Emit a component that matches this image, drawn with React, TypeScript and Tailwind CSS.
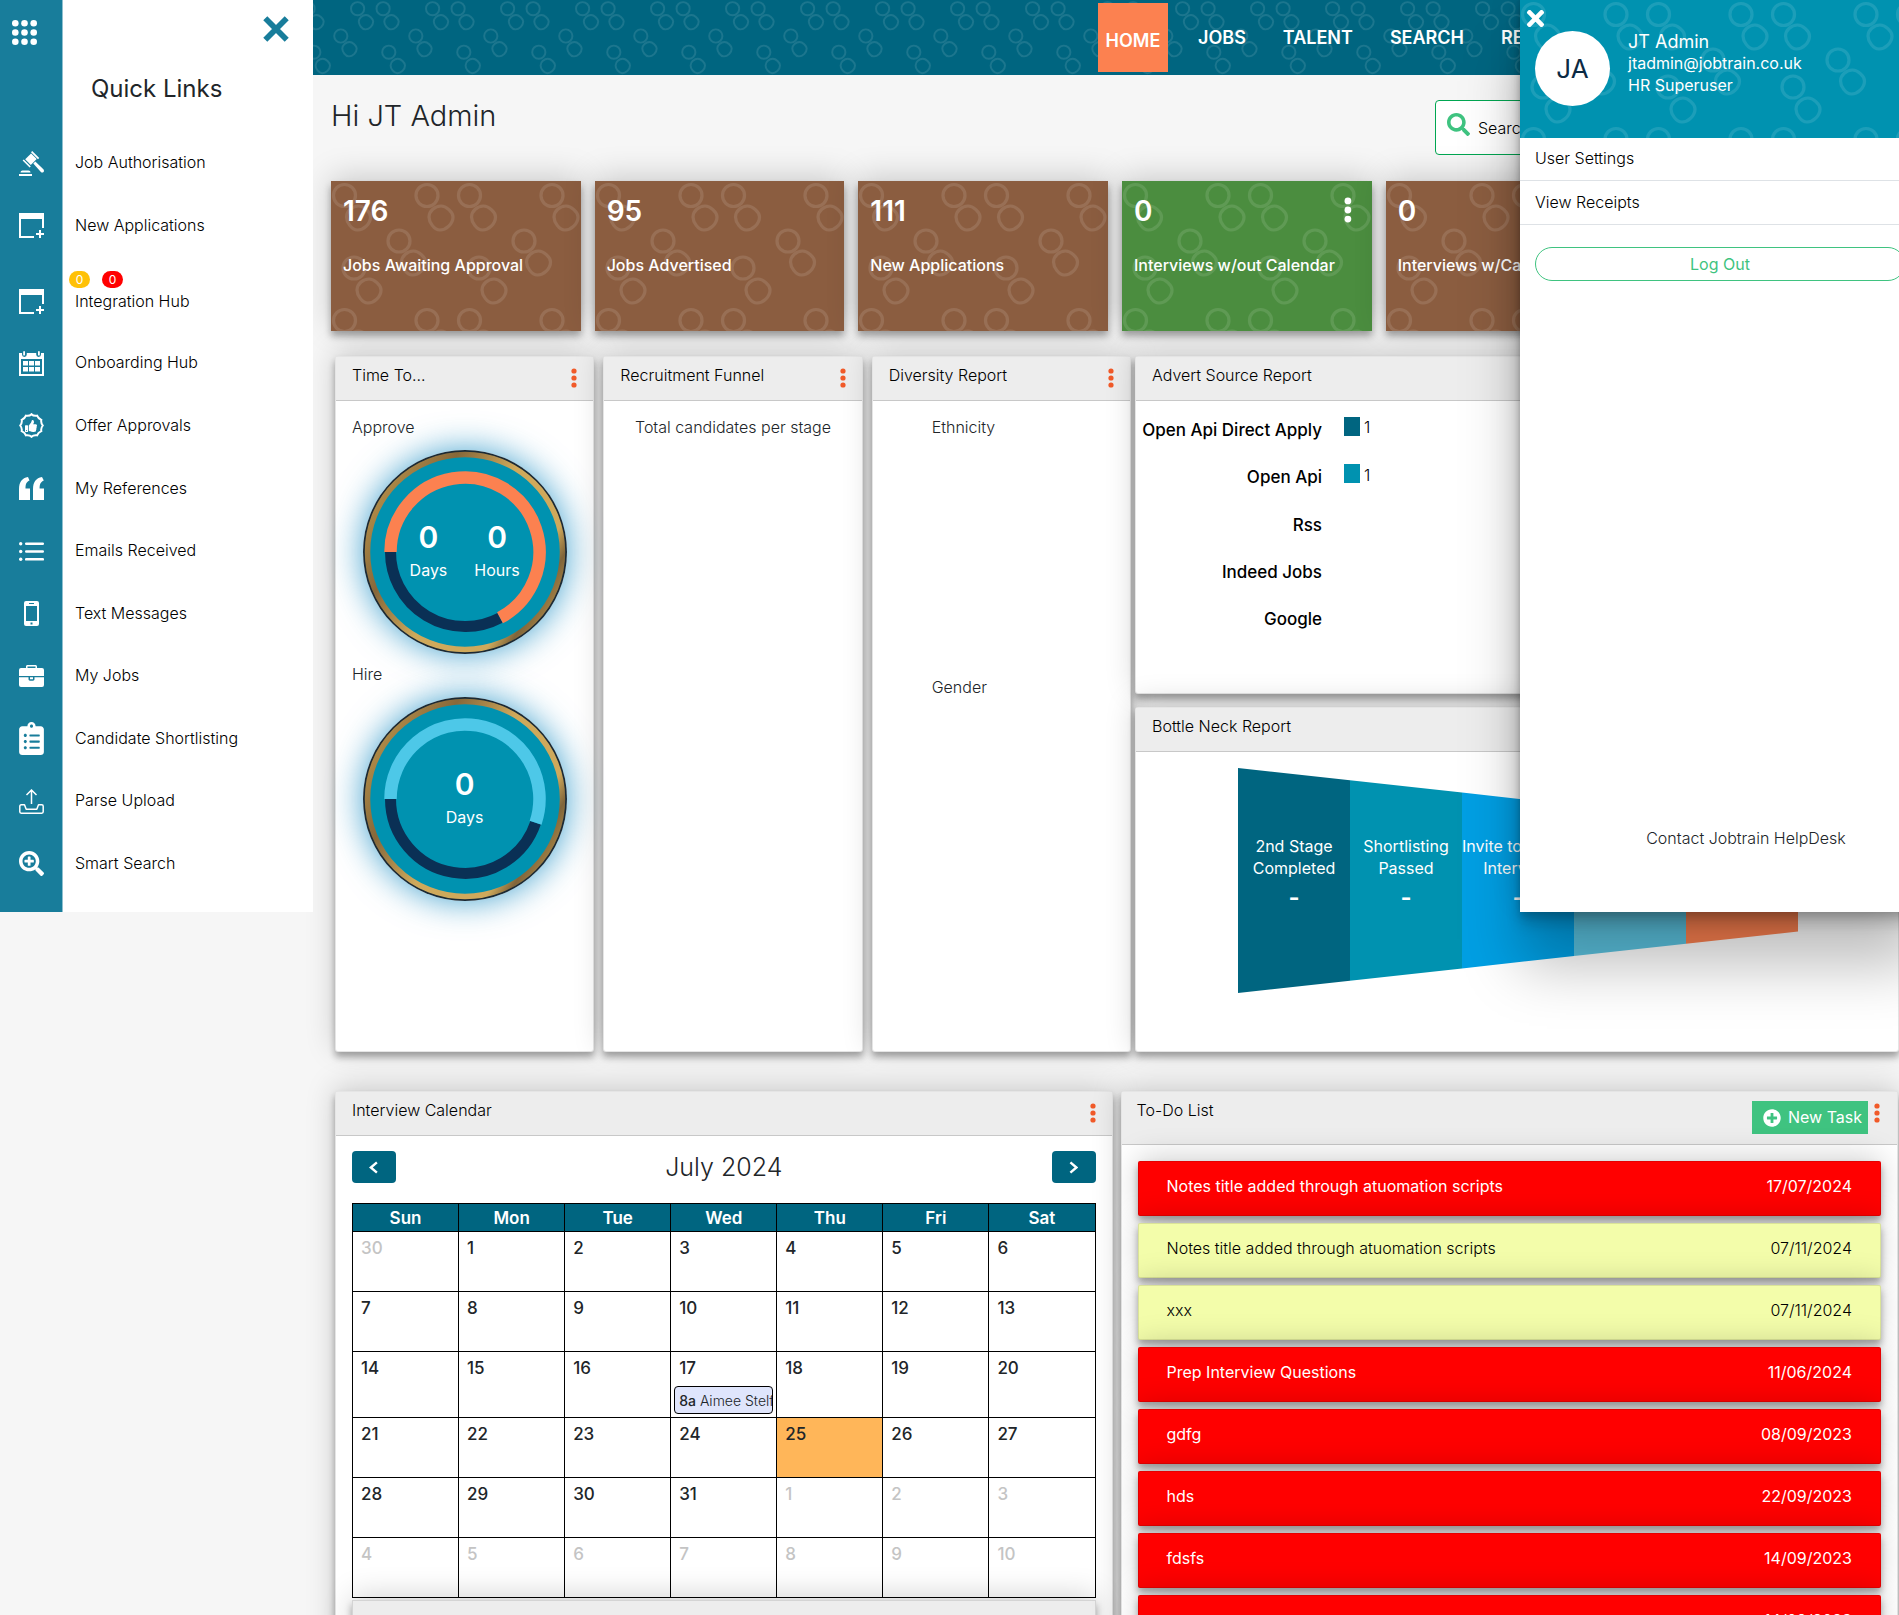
import React, { useId } from "react";
import { FaClipboardList, FaPlusCircle, FaSearch, FaSearchPlus, FaThumbsUp, FaTimes } from "react-icons/fa";

const panelShadow = "shadow-[0_-4px_30px_rgba(0,0,0,0.18),0_5px_7px_rgba(0,0,0,0.32)]";

function Rings({ size, offset = 0 }: { size: number; offset?: number }) {
  const id = useId();
  const blob = "M0 -12C5 -12 12 -6 12 -1C12 6 5 12 -1 12C-7 12 -12 4 -12 -1C-12 -7 -6 -12 0 -12Z";
  const pairs = [
    [13.5, 14.5, 27.5, 37],
    [96, 14.5, 110, 37],
    [68, 60, 82.5, 82],
    [23, 87, 38, 110],
  ];
  return (
    <svg aria-hidden="true" className="pointer-events-none absolute inset-0 h-full w-full">
      <defs>
        <pattern id={id} x={offset} y="0" width={size} height={size} patternUnits="userSpaceOnUse" viewBox="0 0 125 125">
          <g fill="none" stroke="#fff" strokeOpacity="0.11" strokeWidth="3.2">
            {pairs.map((p) => (
              <g key={p[0]}>
                <circle cx={p[0]} cy={p[1]} r="11" />
                <path d={blob} transform={`translate(${p[2]} ${p[3]})`} />
              </g>
            ))}
          </g>
        </pattern>
      </defs>
      <rect width="100%" height="100%" fill={`url(#${id})`} />
    </svg>
  );
}

const Gavel = () => (
  <svg viewBox="0 0 25 25" className="size-[25px]" fill="currentColor">
    <path d="M0 23h13v2H0zM1.500 21.600c0-1.200 1-2 2-2H9.500c1.200 0 2 .8 2 2z" />
    <path d="M6.200 8.300l5.900-5.900 5.600 5.600-5.900 5.900z" />
    <path d="M12 1.200l1.200-1.200 7 7-1.200 1.200zM3.600 9.600l1.200-1.200 7 7-1.200 1.200z" />
    <path d="M14.300 12.400l2-2 8.100 7.900c.8.9.7 1.900.1 2.600-.7.700-1.900.7-2.600 0z" />
  </svg>
);
const WindowPlus = () => (
  <svg viewBox="0 0 25 25" className="size-[25px]" fill="currentColor">
    <path d="M0 0h25v15h-2V6H2v17h13v2H0z" />
    <path d="M20 17h2v3h3v2h-3v3h-2v-3h-3v-2h3z" />
  </svg>
);
const Calendar = () => (
  <svg viewBox="0 0 25 25" className="size-[25px]" fill="currentColor">
    <path fillRule="evenodd" d="M0 2h3v1.500a2.400 2.400 0 0 0 4.800 0V2h9.400v1.500a2.400 2.400 0 0 0 4.800 0V2h3v23H0zM2 8v15h21V8z" />
    <rect x="4.200" y="0" width="1.800" height="4.600" rx=".9" />
    <rect x="19" y="0" width="1.800" height="4.600" rx=".9" />
    <path d="M4 10h5v4.500H4zM10 10h5v4.500h-5zM16 10h5v4.500h-5zM4 16h5v4.500H4zM10 16h5v4.500h-5zM16 16h5v4.500h-5z" />
  </svg>
);
const Badge = () => (
  <span className="relative flex size-[25px] items-center justify-center">
    <svg viewBox="0 0 25 25" className="absolute inset-0 size-[25px]" fill="none" stroke="currentColor" strokeWidth="2">
      <path d="M12.500 1.200q2 2.100 5.600 1.500 1 2.800 4.200 4.200-.6 2.900 1.500 5.600-2.100 2.700-1.500 5.600-3.200 1.400-4.200 4.200-3.600-.6-5.600 1.500-2-2.100-5.600-1.500-1-2.800-4.200-4.200.6-2.900-1.500-5.600 2.100-2.700 1.500-5.600 3.200-1.400 4.200-4.200 3.600.6 5.600-1.500z" />
    </svg>
    <FaThumbsUp className="size-[12px]" />
  </span>
);
const Quote = () => (
  <svg viewBox="0 0 25 23" className="h-[23px] w-[25px]" fill="currentColor">
    <path d="M0 23V12C0 5 3 1 9 0l1.500 3.500C7.500 4.800 6.500 7 6.500 11.500H11V23zM14 23V12c0-7 3-11 9-12l1.800 3.500c-3 1.300-4.200 3.500-4.200 8H25V23z" />
  </svg>
);
const List = () => (
  <svg viewBox="0 0 25 19" className="h-[19px] w-[25px]" fill="currentColor">
    {[1.7, 9.5, 17.3].map((y) => (
      <g key={y}>
        <circle cx="1.700" cy={y} r="1.700" />
        <rect x="6" y={y - 1.3} width="19" height="2.600" rx="1.200" />
      </g>
    ))}
  </svg>
);
const Mobile = () => (
  <svg viewBox="0 0 15 25" className="h-[25px] w-[15px]" fill="currentColor">
    <path fillRule="evenodd" d="M2 0h11a2 2 0 0 1 2 2v21a2 2 0 0 1-2 2H2a2 2 0 0 1-2-2V2a2 2 0 0 1 2-2zM2 5v15h11V5zM5 2v1h5V2zM6.500 21.500v2h2v-2z" />
  </svg>
);
const Briefcase = () => (
  <svg viewBox="0 0 25 22" className="h-[22px] w-[25px]" fill="currentColor">
    <path fillRule="evenodd" d="M7 3V1.500C7 .7 7.600 0 8.500 0h8c.8 0 1.500.7 1.500 1.500V3h5a2 2 0 0 1 2 2v6H0V5a2 2 0 0 1 2-2zM8.500 1.500V3h8V1.500z" />
    <path d="M0 12.300h9.500V14c0 1 .6 1.700 1.500 1.700h3c.9 0 1.500-.7 1.500-1.700v-1.700H25V20a2 2 0 0 1-2 2H2a2 2 0 0 1-2-2zM11 12.300h3v2h-3z" />
  </svg>
);
const Upload = () => (
  <svg viewBox="0 0 25 25" className="size-[25px]" fill="none" stroke="currentColor" strokeWidth="1.500">
    <path d="M12.500 15V1.200M7.500 6l5-5 5 5" />
    <path d="M5.500 15.800H2.200c-.9 0-1.400.5-1.400 1.400v5.600c0 .9.600 1.400 1.400 1.400h20.600c.9 0 1.400-.5 1.400-1.400v-5.600c0-.9-.5-1.400-1.400-1.400h-3.300l-1.700 4.500H7.200z" strokeLinejoin="round" />
  </svg>
);

const links: { label: string; icon: React.ReactNode; badges?: boolean }[] = [
  { label: "Job Authorisation", icon: <Gavel /> },
  { label: "New Applications", icon: <WindowPlus /> },
  { label: "Integration Hub", icon: <WindowPlus />, badges: true },
  { label: "Onboarding Hub", icon: <Calendar /> },
  { label: "Offer Approvals", icon: <Badge /> },
  { label: "My References", icon: <Quote /> },
  { label: "Emails Received", icon: <List /> },
  { label: "Text Messages", icon: <Mobile /> },
  { label: "My Jobs", icon: <Briefcase /> },
  { label: "Candidate Shortlisting", icon: <FaClipboardList className="h-[33px] w-[25px]" /> },
  { label: "Parse Upload", icon: <Upload /> },
  { label: "Smart Search", icon: <FaSearchPlus className="size-[25px]" /> },
];

function QuickLinks() {
  return (
    <aside className="w-[313px]">
      <div className="flex h-[912px] flex-col bg-[linear-gradient(to_right,#187d9b_62px,#8fc0cf_62px,#8fc0cf_63px,#fff_63px)]">
        <div className="flex h-[60px] items-start justify-between pt-[16px] pr-[24px] pl-[12px]">
          <button aria-label="Open apps" className="mt-1 text-white">
            <svg viewBox="0 0 25 25" className="size-[25px]" fill="currentColor">
              {[3.3, 12.5, 21.7].map((y) => [3.3, 12.5, 21.7].map((x) => <circle key={`${x}-${y}`} cx={x} cy={y} r="3.300" />))}
            </svg>
          </button>
          <button aria-label="Close quick links" className="text-[#187d9b]">
            <svg viewBox="0 0 25 25" className="size-[26px]" fill="none" stroke="currentColor" strokeWidth="5.500">
              <path d="M2.200 2.200l20.600 20.600M22.800 2.200L2.200 22.800" />
            </svg>
          </button>
        </div>
        <h2 className="h-[72px] pt-[13px] pl-[91px] text-[24px] leading-[32px] text-[#212529]">Quick Links</h2>
        <ul className="flex h-[763px] flex-col">
          {links.map((l) => (
            <li key={l.label} className={l.badges ? "relative flex flex-[6] items-center" : "flex flex-[5] items-center"}>
              <a href="#" className={`flex w-full items-center text-[16px] font-light text-black ${l.badges ? "pt-[14px]" : ""}`}>
                <span className="flex w-[62px] justify-center text-white">{l.icon}</span>
                <span className="pb-[2px] pl-[13px]">{l.label}</span>
              </a>
              {l.badges && (
                <span className="absolute top-[14px] left-[69px] flex gap-[12px] text-center text-[12px] leading-[17px] text-white">
                  <span className="w-[21px] rounded-full bg-[#ffc107]">0</span>
                  <span className="w-[21px] rounded-full bg-[#f00]">0</span>
                </span>
              )}
            </li>
          ))}
        </ul>
      </div>
    </aside>
  );
}

const Dots = ({ className }: { className: string }) => (
  <button aria-label="Options" className={className}>
    <svg viewBox="0 0 6 20" className="h-full" fill="currentColor">
      <circle cx="3" cy="3" r="2.600" />
      <circle cx="3" cy="10" r="2.600" />
      <circle cx="3" cy="17" r="2.600" />
    </svg>
  </button>
);

function Panel({ title, menu = true, children, className = "" }: { title: string; menu?: boolean; children?: React.ReactNode; className?: string }) {
  return (
    <section className={`flex min-w-0 flex-col rounded-[3px] border border-black/10 bg-white ${panelShadow} ${className}`}>
      <header className="flex h-[44px] shrink-0 items-start justify-between border-b border-[#c8c8c8] bg-[#ededed] pt-[6px] pr-[16px] pl-[16px]">
        <h3 className="text-[16px] leading-[24px] font-light text-black">{title}</h3>
        {menu && <Dots className="mt-[5px] h-[20px] text-[#f15a29]" />}
      </header>
      {children}
    </section>
  );
}

function Gauge({ color, path, rest, items }: { color: string; path: string; rest: string; items: string[] }) {
  const id = useId();
  return (
    <div className="relative mx-auto flex size-[204px] items-center justify-center gap-[27px] rounded-full shadow-[0_0_34px_rgba(0,130,190,0.75)]">
      <svg viewBox="-102 -102 204 204" className="absolute inset-0 size-full" fill="none">
        <defs>
          <linearGradient id={id} x1="0" y1="0.2" x2="1" y2="0.8">
            <stop offset="0" stopColor="#b8924a" />
            <stop offset="0.250" stopColor="#87683a" />
            <stop offset="0.500" stopColor="#cfa95b" />
            <stop offset="0.800" stopColor="#cfa95b" />
            <stop offset="0.880" stopColor="#80653a" />
            <stop offset="1" stopColor="#b8924a" />
          </linearGradient>
        </defs>
        <circle r="102" fill="#1a2a35" />
        <circle r="97.500" fill="#0092b0" stroke={`url(#${id})`} strokeWidth="5.500" />
        <path d={rest} stroke="#0a3055" strokeWidth="11" />
        <path d={path} stroke={color} strokeWidth="12.500" />
      </svg>
      {items.map((t) => (
        <div key={t} className="relative pb-[4px] text-center text-white">
          <div className="text-[30px] leading-[36px] font-semibold">0</div>
          <div className="pt-[3px] text-[16px] leading-[24px] font-normal">{t}</div>
        </div>
      ))}
    </div>
  );
}

const stats = [
  { n: "176", t: "Jobs Awaiting Approval" },
  { n: "95", t: "Jobs Advertised" },
  { n: "111", t: "New Applications" },
  { n: "0", t: "Interviews w/out Calendar", green: true },
  { n: "0", t: "Interviews w/Calendar" },
  { n: "", t: "" },
];

const sources = [
  { t: "Open Api Direct Apply", c: "bg-[#006580]" },
  { t: "Open Api", c: "bg-[#0092b0]" },
  { t: "Rss", c: "" },
  { t: "Indeed Jobs", c: "" },
  { t: "Google", c: "" },
];

const stages = [
  { l: ["2nd Stage", "Completed"], c: "#006580" },
  { l: ["Shortlisting", "Passed"], c: "#0092b0" },
  { l: ["Invite to Phone", "Interview"], c: "#009fe3" },
  { l: [], c: "#5bc3e0" },
  { l: [], c: "#fc8150" },
];

const weeks = [
  [30, 1, 2, 3, 4, 5, 6],
  [7, 8, 9, 10, 11, 12, 13],
  [14, 15, 16, 17, 18, 19, 20],
  [21, 22, 23, 24, 25, 26, 27],
  [28, 29, 30, 31, 1, 2, 3],
  [4, 5, 6, 7, 8, 9, 10],
];

const todos = [
  { t: "Notes title added through atuomation scripts", d: "17/07/2024", red: true },
  { t: "Notes title added through atuomation scripts", d: "07/11/2024", red: false },
  { t: "xxx", d: "07/11/2024", red: false },
  { t: "Prep Interview Questions", d: "11/06/2024", red: true },
  { t: "gdfg", d: "08/09/2023", red: true },
  { t: "hds", d: "22/09/2023", red: true },
  { t: "fdsfs", d: "14/09/2023", red: true },
  { t: "", d: "14/09/2023", red: true },
];

function CalendarPanel() {
  return (
    <Panel title="Interview Calendar">
      <div className="flex items-center justify-between px-[16px] pt-[15px] pb-[20px]">
        <button aria-label="Previous month" className="flex h-[32px] w-[44px] items-center justify-center rounded-[4px] bg-[#006580] text-white">
          <svg viewBox="0 0 10 14" className="h-[13px]" fill="none" stroke="currentColor" strokeWidth="2.600">
            <path d="M8.500 1.500L2 7l6.500 5.500" />
          </svg>
        </button>
        <h2 className="text-[25px] leading-[32px] font-light text-[#212529]">July 2024</h2>
        <button aria-label="Next month" className="flex h-[32px] w-[44px] items-center justify-center rounded-[4px] bg-[#006580] text-white">
          <svg viewBox="0 0 10 14" className="h-[13px]" fill="none" stroke="currentColor" strokeWidth="2.600">
            <path d="M1.500 1.500L8 7l-6.500 5.500" />
          </svg>
        </button>
      </div>
      <div className="px-[16px]">
        <table className="w-full table-fixed border-collapse text-[17px] text-[#212529]">
          <thead>
            <tr className="h-[28px] bg-[#006580] text-white">
              {["Sun", "Mon", "Tue", "Wed", "Thu", "Fri", "Sat"].map((d) => (
                <th key={d} className="border border-black p-0 leading-[24px] font-semibold">{d}</th>
              ))}
            </tr>
          </thead>
          <tbody>
            {weeks.map((w, i) => (
              <tr key={i} className={i === 2 ? "h-[66px]" : "h-[60px]"}>
                {w.map((d, j) => {
                  const out = (i === 0 && d > 20) || (i > 3 && d < 20);
                  return (
                    <td key={j} className={`border border-black p-0 align-top ${d === 25 ? "bg-[#ffb659]" : ""}`}>
                      <div className={`px-[8px] pt-[4px] leading-[24px] font-medium ${out ? "text-[#c4c4c4]" : ""}`}>{d}</div>
                      {d === 17 && (
                        <a href="#" className="mx-[3px] mt-[6px] block h-[28px] overflow-hidden rounded-[4px] border border-black bg-[#dfe5fc] pl-[4px] text-[14px] leading-[28px] font-light whitespace-nowrap">
                          <strong className="font-medium">8a</strong> Aimee Stelfox
                        </a>
                      )}
                    </td>
                  );
                })}
              </tr>
            ))}
          </tbody>
        </table>
        <div className={`mt-[2px] h-[40px] border border-black/10 bg-[#ededed] ${panelShadow}`} />
      </div>
    </Panel>
  );
}

function TodoPanel() {
  return (
    <section className={`min-w-0 rounded-[3px] border border-black/10 bg-white ${panelShadow}`}>
      <header className="flex h-[53px] items-start border-b border-[#c8c8c8] bg-[#ededed] pr-[17px] pl-[15px]">
        <h3 className="flex-1 pt-[6px] text-[16px] leading-[24px] font-light text-black">To-Do List</h3>
        <button className="mt-[9px] flex h-[33px] items-center gap-[7px] bg-[#3fc380] pr-[6px] pb-[2px] pl-[11px] text-[16px] text-white">
          <FaPlusCircle className="mt-[2px] size-[18px]" />
          New Task
        </button>
        <Dots className="mt-[11px] ml-[6px] h-[20px] text-[#f15a29]" />
      </header>
      <ul className="flex flex-col gap-[7px] px-[16px] pt-[16px]">
        {todos.map((t, i) => (
          <li
            key={i}
            className={`flex h-[55px] items-start justify-between rounded-[2px] border border-black/10 px-[28px] pt-[12px] text-[16px] leading-[24px] ${panelShadow} ${
              t.red ? "bg-[#f00] text-white" : "bg-[#f3fdaa] font-light text-black"
            }`}
          >
            <span>{t.t}</span>
            <span>{t.d}</span>
          </li>
        ))}
      </ul>
    </section>
  );
}

function UserDrawer() {
  return (
    <aside className="absolute top-0 -right-[21px] flex h-[912px] w-[400px] flex-col bg-white shadow-[0_54px_55px_rgba(0,0,0,0.25),0_-12px_30px_rgba(0,0,0,0.12),0_4px_6px_rgba(0,0,0,0.12),0_12px_13px_rgba(0,0,0,0.17),0_-3px_5px_rgba(0,0,0,0.09)]">
      <div className="relative flex h-[138px] shrink-0 gap-[18px] bg-[#0092b0] pt-[31px] pl-[15px] text-white">
        <Rings size={125} />
        <button aria-label="Close user menu" className="absolute top-[6px] left-[3px]">
          <FaTimes className="size-[25px]" />
        </button>
        <div className="relative flex size-[75px] items-center justify-center rounded-full bg-white text-[26px] text-[#0b2a44]">JA</div>
        <div className="relative text-[16px]">
          <div className="text-[18px] leading-[22px]">JT Admin</div>
          <div className="leading-[20px]">jtadmin@jobtrain.co.uk</div>
          <div className="leading-[25px]">HR Superuser</div>
        </div>
      </div>
      <nav className="text-[16px] font-light text-black">
        <a href="#" className="block h-[43px] border-b border-[#dee2e6] pl-[15px] leading-[41px]">User Settings</a>
        <a href="#" className="block h-[44px] border-b border-[#dee2e6] pl-[15px] leading-[42px]">View Receipts</a>
      </nav>
      <button className="mx-[15px] mt-[22px] h-[34px] rounded-full border border-[#3fc380] text-[16px] text-[#3fc380]">Log Out</button>
      <a href="#" className="mt-auto mb-[62px] pl-[52px] text-center text-[16px] leading-[24px] font-light text-[#212529]">Contact Jobtrain HelpDesk</a>
    </aside>
  );
}

export default function App() {
  return (
    <div className="relative flex h-screen items-start overflow-hidden bg-[#f6f6f6] font-['Inter','Open_Sans',sans-serif]">
      <div className="relative z-10 shrink-0"><QuickLinks /></div>
      <main className="min-w-0 flex-1">
        <header className="relative h-[75px] bg-[#006580]">
          <Rings size={75} offset={-13} />
          <nav className="relative flex h-full items-center gap-[37px] overflow-hidden pl-[785px] text-[18px] leading-[24px] font-semibold whitespace-nowrap text-white">
            <a href="#" className="-mr-[7px] flex h-[69px] w-[70px] shrink-0 items-center justify-center bg-[#fc8150] pt-[7px]">HOME</a>
            <a href="#">JOBS</a>
            <a href="#">TALENT</a>
            <a href="#">SEARCH</a>
            <a href="#">REPORTS</a>
          </nav>
        </header>

        <div className="flex h-[106px] items-start justify-between pl-[18px]">
          <h1 className="pt-[21px] text-[29px] leading-[40px] font-light text-[#212529]">Hi JT Admin</h1>
          <label className="mt-[25px] flex h-[55px] w-[464px] items-center gap-[8px] rounded-[4px] border border-[#00a651] bg-white pl-[11px]">
            <FaSearch className="mb-[6px] size-[23px] text-[#3fc380]" />
            <input aria-label="Search" placeholder="Search..." className="min-w-0 flex-1 text-[16px] font-light outline-none placeholder:text-black" />
          </label>
        </div>

        <div className="grid grid-cols-6 gap-[14px] pl-[18px]">
          {stats.map((s, i) => (
            <article key={i} className={`relative h-[150px] pt-[12px] pl-[12px] text-white ${s.green ? "bg-[#4b8d3f]" : "bg-[#8b5d40]"} ${panelShadow}`}>
              <Rings size={125} />
              <div className="relative text-[28px] leading-[36px] font-semibold">{s.n}</div>
              <div className="relative pt-[24px] text-[16px] leading-[24px] font-medium whitespace-nowrap">{s.t}</div>
              {s.green && <Dots className="absolute top-[16px] right-[20px] h-[26px] text-white" />}
            </article>
          ))}
        </div>

        <div className="mt-[25px] flex gap-[4px] pl-[22px]">
          <div className="grid flex-[796] grid-cols-3 gap-[9px]">
            <Panel title="Time To...">
              <div className="pt-[14px] font-light text-[#212529]">
                <p className="pl-[16px] text-[16px] leading-[24px]">Approve</p>
                <div className="pt-[11px] pb-[8px]">
                  <Gauge
                    color="#fc8150"
                    path="M-74.500 0A74.500 74.500 0 1 1 35 65.800"
                    rest="M35 65.800A74.500 74.500 0 0 1 -74.500 0"
                    items={["Days", "Hours"]}
                  />
                </div>
                <p className="pl-[16px] text-[16px] leading-[24px]">Hire</p>
                <div className="pt-[11px]">
                  <Gauge
                    color="#4dc8e8"
                    path="M-74.500 0A74.500 74.500 0 1 1 70.600 23.700"
                    rest="M70.600 23.700A74.500 74.500 0 0 1 -74.500 0"
                    items={["Days"]}
                  />
                </div>
              </div>
            </Panel>
            <Panel title="Recruitment Funnel">
              <p className="pt-[14px] text-center text-[16px] leading-[24px] font-light text-[#212529]">Total candidates per stage</p>
            </Panel>
            <Panel title="Diversity Report">
              <div className="pt-[14px] pl-[59px] text-[16px] leading-[24px] font-light text-[#212529]">
                <p className="h-[260px]">Ethnicity</p>
                <p>Gender</p>
              </div>
            </Panel>
          </div>
          <div className="flex min-w-0 flex-[764] flex-col gap-[13px]">
            <Panel title="Advert Source Report" menu={false} className="h-[338px]">
              <ul className="flex h-[242px] flex-col pt-[5px] text-[17px] leading-[24px]">
                {sources.map((s) => (
                  <li key={s.t} className="flex flex-1 items-center">
                    <span className="w-[186px] text-right font-medium whitespace-nowrap text-black">{s.t}</span>
                    {s.c && (
                      <>
                        <span className={`mb-[7px] ml-[22px] h-[19px] w-[16px] ${s.c}`} />
                        <span className="mb-[5px] ml-[4px] text-[16px] font-light">1</span>
                      </>
                    )}
                  </li>
                ))}
              </ul>
            </Panel>
            <Panel title="Bottle Neck Report" menu={false} className="h-[345px]">
              <div className="relative mt-[16px] ml-[102px] flex h-[225px] w-[560px]">
                <svg viewBox="0 0 560 225" className="absolute inset-0 size-full">
                  {stages.map((s, i) => {
                    const a = i * 12.3;
                    const b = a + 12.3;
                    return <polygon key={s.c} fill={s.c} points={`${i * 112},${a} ${i * 112 + 112},${b} ${i * 112 + 112},${225 - b} ${i * 112},${225 - a}`} />;
                  })}
                </svg>
                {stages.map((s) => (
                  <div key={s.c} className="relative w-[112px] pt-[67px] text-center text-[16px] leading-[22px] whitespace-nowrap text-white">
                    {s.l.map((x) => <div key={x}>{x}</div>)}
                    {s.l.length > 0 && <div className="pt-[8px] text-[24px] font-semibold">-</div>}
                  </div>
                ))}
              </div>
            </Panel>
          </div>
        </div>

        <div className="mt-[39px] grid grid-cols-2 gap-[8px] pr-[1px] pl-[22px]">
          <CalendarPanel />
          <TodoPanel />
        </div>
      </main>
      <UserDrawer />
    </div>
  );
}
